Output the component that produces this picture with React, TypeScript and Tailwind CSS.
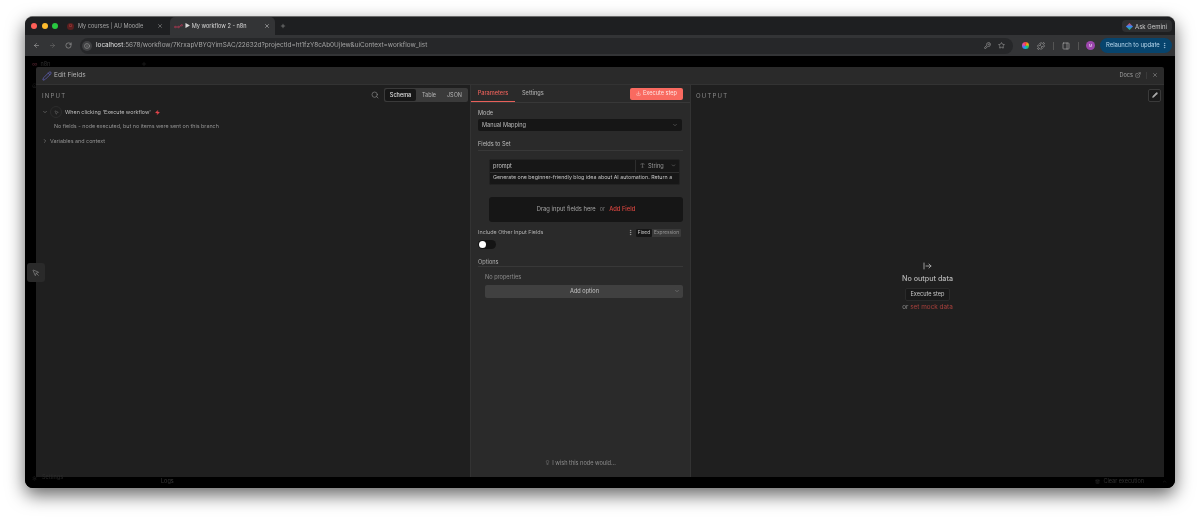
import { ArrowLeft, ArrowRight, ChevronDown, ChevronRight, Download, ExternalLink, Info, Lightbulb, MousePointer, MousePointer2, MoreVertical, Pencil, PanelRight, Plus, Puzzle, RotateCw, Search, Star, Type, X, KeyRound, Zap, Settings, Trash2, ChevronUp, Home } from "lucide-react";

function Tab({ active, icon, title }: { active?: boolean; icon: React.ReactNode; title: string }) {
  return (
    <div className={`flex h-[18px] items-center rounded-t-[5px] pl-[3px] ${active ? "w-[105px] bg-[#333436] pr-[5px] text-[#d8d8d8]" : "w-[106px] pr-[7px] text-[#a5a5a5]"}`}>
      {icon}
      <span className="flex-1 truncate text-[5.6px]">{title}</span>
      <X size={6} strokeWidth={2} />
    </div>
  );
}

function Toolbar() {
  return (
    <div className="flex h-[21px] items-center bg-[#333436] pl-[5px] pr-[3px] text-[#a9a9a9]">
      <div className="flex w-[50px] items-center gap-[9px] pl-[3px]">
        <ArrowLeft size={7} />
        <ArrowRight size={7} className="text-[#6d6d6d]" />
        <RotateCw size={7} />
      </div>
      <div className="flex h-[16px] w-[933px] shrink-0 items-center rounded-full bg-[#262729] pl-[2px] pr-[5px]">
        <span className="flex h-[10px] w-[10px] items-center justify-center rounded-full bg-[#3f4042]">
          <Info size={6} />
        </span>
        <span className="ml-[4px] flex-1 truncate text-[6.4px] text-[#a3a3a3]">
          <span className="text-[#e2e2e2]">localhost</span>:5678/workflow/7KrxapVBYQYimSAC/22632d?projectId=ht1fzY8cAb0Ujlew&amp;uiContext=workflow_list
        </span>
        <KeyRound size={7} className="mr-[7px]" />
        <Star size={7} className="mr-[3px]" />
      </div>
      <div className="ml-[9px] h-[7px] w-[7px] rounded-full bg-[conic-gradient(#ef4444,#eab308,#22c55e,#06b6d4,#6366f1,#ec4899,#ef4444)]" />
      <Puzzle size={8} className="ml-[8px]" />
      <div className="ml-[8px] h-[8px] w-px bg-[#555]" />
      <PanelRight size={8} className="ml-[8px]" />
      <div className="ml-[8px] h-[8px] w-px bg-[#555]" />
      <div className="ml-[7px] flex h-[9px] w-[9px] items-center justify-center rounded-full bg-[#9c46ad] text-[4px] text-[#e9d4ee]">M</div>
      <div className="ml-[5px] flex h-[15px] flex-1 items-center justify-between rounded-full bg-[#07446d] pl-[6px] pr-[4px] text-[5.9px] text-[#b9d8ee]">
        <span className="whitespace-nowrap">Relaunch to update</span>
        <MoreVertical size={7} />
      </div>
    </div>
  );
}

function InputPanel() {
  return (
    <div className="flex w-[434px] shrink-0 flex-col bg-[#1f1f1f] pl-[6px] pr-[2px]">
      <div className="flex h-[20px] items-center justify-between">
        <span className="text-[6px] tracking-[1.2px] text-[#8a8a8a]">INPUT</span>
        <div className="flex items-center gap-[5px]">
          <Search size={8} className="text-[#8a8a8a]" />
          <div className="flex h-[14px] items-center rounded-[2px] bg-[#3a3a3a] p-px text-[5.5px] text-[#b5b5b5]">
            <span className="flex h-full w-[31px] items-center justify-center rounded-[2px] bg-[#171717] font-medium text-[#e0e0e0]">Schema</span>
            <span className="w-[26px] text-center">Table</span>
            <span className="w-[25px] text-center">JSON</span>
          </div>
        </div>
      </div>
      <div className="flex h-[14px] items-center text-[5.4px] text-[#bdbdbd]">
        <ChevronDown size={6} className="text-[#8a8a8a]" />
        <span className="ml-[2px] flex h-[12px] w-[12px] items-center justify-center rounded-full border border-[#2c2c2c] text-[#7c7c7c]">
          <MousePointer2 size={5} />
        </span>
        <span className="ml-[3px]">When clicking 'Execute workflow'</span>
        <Zap size={5} className="ml-[4px] fill-[#e5484d] text-[#e5484d]" />
      </div>
      <p className="ml-[12px] mt-[3px] text-[5.4px] text-[#929292]">No fields - node executed, but no items were sent on this branch</p>
      <div className="mt-[7px] flex items-center text-[5.4px] text-[#929292]">
        <ChevronRight size={6} />
        <span className="ml-[2px]">Variables and context</span>
      </div>
    </div>
  );
}

function ParamsPanel() {
  return (
    <div className="flex w-[221px] shrink-0 flex-col border-x border-[#333] bg-[#2a2a2a]">
      <div className="flex h-[18px] shrink-0 items-stretch justify-between border-b border-[#383838] pr-[7px]">
        <div className="flex text-[5.6px] font-medium">
          <span className="flex w-[44px] items-center justify-center border-b border-[#e8605a] text-[#e8605a]">Parameters</span>
          <span className="ml-[7px] flex items-center text-[#a9a9a9]">Settings</span>
        </div>
        <div className="my-auto flex h-[12px] w-[53px] items-center justify-center gap-[2px] rounded-[2px] bg-[#f96a60] text-[5.6px] text-[#fde4e1]">
          <Download size={5} />
          <span>Execute step</span>
        </div>
      </div>
      <div className="flex min-h-0 flex-1 flex-col px-[7px]">
        <span className="mt-[6px] text-[5.6px] text-[#bdbdbd]">Mode</span>
        <div className="mr-[1px] mt-[2px] flex h-[12px] shrink-0 items-center justify-between rounded-[2px] bg-[#161616] px-[4px] text-[5.6px] text-[#bdbdbd]">
          Manual Mapping
          <ChevronDown size={6} className="text-[#777]" />
        </div>
        <span className="mt-[9px] border-b border-[#383838] pb-[1px] text-[5.6px] text-[#bdbdbd]">Fields to Set</span>
        <div className="ml-[11px] mr-[3px] mt-[8px] shrink-0 rounded-[2px] border border-[#222] bg-[#171717] text-[5.6px] text-[#c4c4c4]">
          <div className="flex h-[13px] border-b border-[#2e2e2e]">
            <span className="flex flex-1 items-center pl-[3px]">prompt</span>
            <span className="flex w-[44px] items-center border-l border-[#2e2e2e] pl-[4px] text-[#999]">
              <Type size={5} />
              <span className="ml-[3px] flex-1">String</span>
              <ChevronDown size={5} className="mr-[3px]" />
            </span>
          </div>
          <div className="flex h-[11px] items-center whitespace-nowrap pl-[3px] text-[5.3px]">Generate one beginner-friendly blog idea about AI automation. Return a</div>
        </div>
        <div className="ml-[11px] mt-[12px] flex h-[25px] shrink-0 items-center justify-center gap-[4px] rounded-[3px] bg-[#161616] text-[5.8px] text-[#a5a5a5]">
          Drag input fields here
          <span className="text-[5.5px] text-[#777]">or</span>
          <span className="font-medium text-[#d8453f]">Add Field</span>
        </div>
        <div className="mr-[2px] mt-[5px] flex h-[11px] shrink-0 items-center justify-between text-[5.4px] text-[#b0b0b0]">
          Include Other Input Fields
          <div className="mt-[1px] flex items-center gap-[2px]">
            <MoreVertical size={7} />
            <div className="flex h-[8px] items-center rounded-[1px] bg-[#3a3a3a] text-[4.8px] text-[#999]">
              <span className="flex h-full items-center rounded-[1px] bg-[#161616] px-[2px] text-[#ccc]">Fixed</span>
              <span className="px-[2px]">Expression</span>
            </div>
          </div>
        </div>
        <div className="mt-[2px] flex h-[9px] w-[18px] shrink-0 items-center rounded-full bg-[#141414] pl-[1px]">
          <div className="h-[7px] w-[7px] rounded-full bg-white" />
        </div>
        <span className="mt-[9px] border-b border-[#383838] text-[5.6px] text-[#b0b0b0]">Options</span>
        <span className="ml-[7px] mt-[6px] text-[5.6px] text-[#8d8d8d]">No properties</span>
        <div className="ml-[7px] mt-[3px] flex h-[13px] shrink-0 items-center rounded-[2px] bg-[#404040] pr-[3px] text-[5.6px] text-[#c4c4c4]">
          <span className="flex-1 pl-[10px] text-center">Add option</span>
          <ChevronDown size={6} className="text-[#888]" />
        </div>
        <div className="mb-[10px] mt-auto flex items-center justify-center gap-[2px] text-[5.6px] text-[#8d8d8d]">
          <Lightbulb size={5} />
          I wish this node would...
        </div>
      </div>
    </div>
  );
}

function OutputPanel() {
  return (
    <div className="flex min-w-0 flex-1 flex-col bg-[#1f1f1f]">
      <div className="flex h-[20px] shrink-0 items-center justify-between pl-[5px] pr-[3px]">
        <span className="text-[6px] tracking-[1.2px] text-[#8a8a8a]">OUTPUT</span>
        <span className="flex h-[13px] w-[13px] items-center justify-center rounded-[2px] border border-[#3a3a3a] bg-[#1a1a1a] text-[#aaa]">
          <Pencil size={6} className="fill-[#aaa]" />
        </span>
      </div>
      <div className="flex flex-1 flex-col items-center pt-[157px] text-[7.2px]">
        <svg width="9" height="8" viewBox="0 0 18 16" fill="none" stroke="#a8a8a8" strokeWidth="1.8" strokeLinecap="round" strokeLinejoin="round">
          <path d="M2 2v12" />
          <path d="M6 8h10" />
          <path d="M12 4l4 4-4 4" />
        </svg>
        <span className="mt-[4px] font-medium text-[#b5b5b5]">No output data</span>
        <span className="mt-[3px] flex h-[13px] w-[45px] items-center justify-center rounded-[2px] border border-[#2a2a2a] bg-[#191919] text-[5.6px] text-[#c8c8c8]">Execute step</span>
        <span className="mt-[2px] text-[6.4px] text-[#8d8d8d]">or <span className="text-[#a8403c]">set mock data</span></span>
      </div>
    </div>
  );
}

export default function App() {
  return (
    <div className="h-[522px] w-[1200px] overflow-hidden bg-white px-[25px] pt-[16px] font-['Inter',sans-serif] blur-[0.4px]">
      <div className="flex h-[472px] flex-col overflow-hidden rounded-[8px] border-t border-[#6a6a6a] bg-black shadow-[0_7px_18px_rgba(0,0,0,0.6)]">
        <div className="flex h-[18px] items-center bg-[#1e1f21] pl-[6px] pr-[3px]">
          <div className="flex gap-[4.5px]">
            <span className="h-[6px] w-[6px] rounded-full bg-[#ff5f57]" />
            <span className="h-[6px] w-[6px] rounded-full bg-[#febc2e]" />
            <span className="h-[6px] w-[6px] rounded-full bg-[#28c840]" />
          </div>
          <div className="ml-[6px] flex">
            <Tab
              title="My courses | AU Moodle"
              icon={<span className="mr-[4px] flex h-[7px] w-[7px] items-center justify-center rounded-full bg-[#5a1f1f] text-[4px] text-[#d04a4a]">O</span>}
            />
            <Tab
              active
              title="▶ My workflow 2 - n8n"
              icon={
                <svg className="ml-[1px] mr-[2px]" width="9" height="5" viewBox="0 0 18 10" fill="none" stroke="#b23a55" strokeWidth="1.6">
                  <circle cx="2.5" cy="6" r="1.5" />
                  <circle cx="9" cy="6" r="1.5" />
                  <circle cx="15.5" cy="2.5" r="1.5" />
                  <path d="M4 6h3.5M10.5 6c3 0 1-3.5 3.5-3.5" />
                </svg>
              }
            />
          </div>
          <Plus size={6} className="ml-[5px] text-[#a5a5a5]" />
          <div className="ml-auto flex h-[12px] items-center gap-[3px] rounded-[4px] bg-[#2e2f31] pl-[5px] pr-[5px] text-[6px] text-[#c8c8c8]">
            <span className="h-[5px] w-[5px] rotate-45 bg-[linear-gradient(135deg,#ef4444,#3b82f6,#22c55e)]" />
            Ask Gemini
          </div>
        </div>
        <Toolbar />
        <div className="relative flex min-h-0 flex-1 flex-col bg-black px-[11px] pt-[11px]">
          {/* workflow page showing faintly behind the modal */}
          <div className="absolute left-[7px] top-[4px] flex items-center gap-[3px] text-[5.5px] text-[#2e2e2e]">
            <span className="font-bold text-[#3d1a22]">∞</span>
            n8n
          </div>
          <Plus size={6} className="absolute left-[116px] top-[5px] text-[#2a2a2a]" />
          <Home size={5} className="absolute left-[7px] top-[27px] text-[#2a2a2a]" />
          <Settings size={5} className="absolute bottom-[7px] left-[7px] text-[#2a2a2a]" />
          <div className="absolute bottom-[7px] left-[17px] text-[5.5px] text-[#2a2a2a]">Settings</div>
          <div className="absolute bottom-[3px] left-[136px] text-[5.5px] text-[#3a3a3a]">Logs</div>
          <Trash2 size={5} className="absolute bottom-[4px] right-[75px] text-[#333]" />
          <div className="absolute bottom-[3px] right-[31px] text-[5.5px] text-[#333]">Clear execution</div>
          <ChevronUp size={5} className="absolute bottom-[4px] right-[8px] text-[#333]" />
          <div className="flex h-[410px] shrink-0 flex-col overflow-hidden rounded-t-[2px] bg-[#2a2a2a]">
            <div className="flex h-[18px] shrink-0 items-center justify-between border-b border-[#333] pl-[6px] pr-[6px]">
              <div className="flex items-center gap-[2px] text-[6.5px] text-[#b5b5b5]">
                <Pencil size={10} strokeWidth={1.5} className="text-[#6f6fd8]" />
                <span className="pt-[1px]">Edit Fields</span>
              </div>
              <div className="flex items-center gap-[5px] text-[5.6px] text-[#a0a0a0]">
                <span className="flex items-center gap-[2px]">Docs <ExternalLink size={6} /></span>
                <span className="h-[7px] w-px bg-[#3a3a3a]" />
                <X size={6} />
              </div>
            </div>
            <div className="flex min-h-0 flex-1">
              <InputPanel />
              <ParamsPanel />
              <OutputPanel />
            </div>
          </div>
          <div className="absolute left-[2px] top-[207px] flex h-[19px] w-[18px] items-center justify-center rounded-[3px] bg-[#2a2a2a] text-[#8a8a8a]">
            <MousePointer size={8} />
          </div>
        </div>
      </div>
    </div>
  );
}
